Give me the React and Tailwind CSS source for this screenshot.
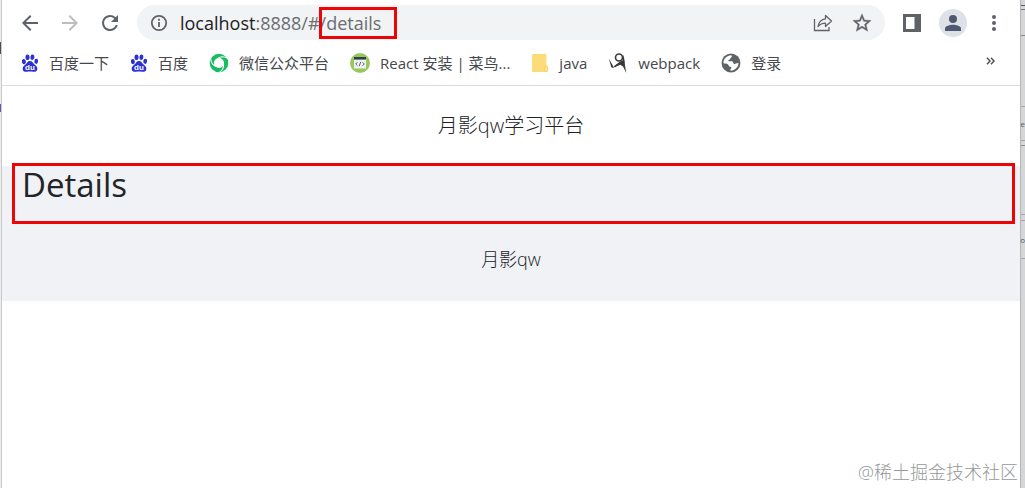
import React from 'react';

const ArrowIcon = ({ className }) => (
  <svg viewBox="0 0 24 24" className={className} fill="currentColor">
    <path d="M20 11H7.83l5.59-5.59L12 4l-8 8 8 8 1.41-1.41L7.83 13H20v-2z" />
  </svg>
);

const ReloadIcon = () => (
  <svg viewBox="0 0 24 24" className="size-6" fill="currentColor">
    <path d="M17.65 6.35A7.96 7.96 0 0 0 12 4a8 8 0 1 0 7.73 10h-2.08A6 6 0 1 1 12 6c1.66 0 3.14.69 4.22 1.78L13 11h7V4l-2.35 2.35z" />
  </svg>
);

const InfoIcon = () => (
  <svg viewBox="0 0 20 20" className="size-5" fill="none" stroke="currentColor" strokeWidth="1.8">
    <circle cx="10" cy="10" r="7.2" />
    <path d="M10 9v5M10 5.8v1.9" />
  </svg>
);

const ShareIcon = () => (
  <svg viewBox="0 0 20 20" className="size-5" fill="none" stroke="currentColor" strokeWidth="1.3">
    <path d="M1.5 6v11.5H16V14" />
    <path d="M12.5 2.5 18.5 8l-6 5.5v-3.3c-3.2 0-5.4.9-7.5 3.3.7-4.2 3-7.2 7.5-7.7z" strokeLinejoin="round" />
  </svg>
);

const StarIcon = () => (
  <svg viewBox="0 0 24 24" className="size-[22px]" fill="currentColor" stroke="currentColor" strokeWidth=".4">
    <path d="m22 9.240-7.190-.620L12 2 9.190 8.630 2 9.240l5.460 4.730L5.820 21 12 17.270 18.180 21l-1.630-7.030L22 9.240zM12 15.400l-3.760 2.270 1-4.280-3.320-2.880 4.380-.380L12 6.100l1.710 4.040 4.380.38-3.320 2.880 1 4.280L12 15.400z" />
  </svg>
);

const PanelIcon = () => (
  <svg viewBox="0 0 18 18" className="size-[18px]">
    <path fill="currentColor" d="M0 0h18v18H0z" />
    <path fill="#fff" d="M3 3h8.500v12H3z" />
  </svg>
);

const BaiduIcon = () => (
  <svg viewBox="0 0 18 18" className="size-[18px]" fill="#2a32d2">
    <ellipse cx="2.900" cy="7.600" rx="2" ry="2.700" transform="rotate(-12 2.900 7.600)" />
    <ellipse cx="6.500" cy="3.200" rx="2" ry="2.800" />
    <ellipse cx="11.400" cy="3.200" rx="2" ry="2.800" transform="rotate(10 11.400 3.200)" />
    <ellipse cx="15.200" cy="7.300" rx="1.900" ry="2.600" transform="rotate(8 15.200 7.300)" />
    <path d="M9 7c2.300 0 2.800 1.900 4.300 3.300 1.800 1.600 3.300 2.600 3 4.900-.3 2.200-2.300 2.900-4.300 2.500-2-.4-4-.4-6 0-2.200.4-4-.4-4.300-2.500-.3-2.200 1.300-3.400 3-4.900C6.200 8.900 6.700 7 9 7z" />
    <text x="9" y="16" textAnchor="middle" fill="#fff" fontSize="8" fontWeight="700" fontFamily="Liberation Sans, sans-serif">du</text>
  </svg>
);

const WechatPlatformIcon = () => (
  <svg viewBox="0 0 20 20" className="size-5" fill="none">
    <circle cx="10" cy="10" r="7.200" stroke="#16bd65" strokeWidth="4.200" />
    {[0, 120, 240].map((angle) => (
      <path key={angle} transform={`rotate(${angle} 10 10)`} d="M8.500 5.500c3-2 6-2.300 9.500-.5" stroke="#fff" strokeWidth="1" />
    ))}
  </svg>
);

const RunoobIcon = () => (
  <svg viewBox="0 0 20 20" className="size-5">
    <circle cx="10" cy="10" r="10" fill="#98c85c" />
    <path fill="#eef2f3" d="M4 5h12v10.500H4z" />
    <path fill="#303d4d" d="M4 4h12v2.600H4z" />
    <path fill="none" stroke="#303d4d" strokeWidth=".8" d="M7.500 9.200 5.700 11l1.800 1.800M12.500 9.200l1.800 1.800-1.800 1.800M10.700 8.900l-1.400 4.200" />
  </svg>
);

const FolderIcon = () => (
  <svg viewBox="0 0 16 18" className="h-[18px] w-[18px]">
    <path fill="#fbdc78" d="M1 0h12.500q1 0 1 1v10.500l1.500 1V17q0 1-1 1H1q-1 0-1-1V1q0-1 1-1z" />
    <path fill="#ffe99a" stroke="#f3cb55" strokeWidth=".7" d="M12.700 17.500v-4.200l1.800-1.600 1.200 1.400v3.400l-1 1z" />
  </svg>
);

const WebpackIcon = () => (
  <svg viewBox="0 0 20 20" className="size-5" fill="none" stroke="#383838">
    <circle cx="11" cy="4.500" r="3.500" strokeWidth="1.600" />
    <path strokeWidth="1.600" d="M14.500 2.500c1.600 3.500 1.400 7 1 10M14.500 8.500c-3 1-5.500 3.300-8 5.300" />
    <path fill="#383838" stroke="none" d="M.7 5.500 4.500 12l1.600 2.800-2.700-.2zM14.500 7.500l1.700 0 2 12.500-3-6.300-2.700-1.900-7 2.700z" />
  </svg>
);

const GlobeIcon = () => (
  <svg viewBox="0 0 18 18" className="size-5">
    <circle cx="9" cy="9" r="8.500" fill="#5f6368" />
    <path fill="#fff" d="M9.200 2c.9.600.7 1.700-.2 2.200-.9.400-.4 1.200-1.200 1.700-.8.400-1.500.6-1.100 1.300.7.800 2.900-.2 3.800.6.8.8.2 1.700 1.400 2 1.200.2 1.300-.7 3.900-.8-.2 3.700-3.300 6.800-7 6.900-.8-.7-.2-1.600.4-2.200.6-.7 0-1.300-.8-1.400-1.300-.1-1.500-.7-1.700-1.500-.2-1-2.500-1.300-4.500-1.600C2.100 5.400 5.200 2 9.200 2z" />
    <path fill="#5f6368" d="M9.300 3.600h3.400l1.500 2.500-2.700.5z" />
  </svg>
);

const bookmarks = [
  { label: '百度一下', icon: BaiduIcon },
  { label: '百度', icon: BaiduIcon },
  { label: '微信公众平台', icon: WechatPlatformIcon },
  { label: 'React 安装 | 菜鸟...', icon: RunoobIcon },
  { label: 'java', icon: FolderIcon },
  { label: 'webpack', icon: WebpackIcon },
  { label: '登录', icon: GlobeIcon },
];

const Toolbar = () => (
  <div className="flex h-[45px] items-center px-4 text-[#5f6368]">
    <button type="button" aria-label="Back" className="mr-4">
      <ArrowIcon className="size-6" />
    </button>
    <button type="button" aria-label="Forward" disabled className="mr-4 text-[#bbbdbf]">
      <ArrowIcon className="size-6 rotate-180" />
    </button>
    <button type="button" aria-label="Reload" className="mr-[15px]">
      <ReloadIcon />
    </button>

    <div className="flex h-[35px] flex-1 items-center rounded-full bg-[#f1f3f4] px-3">
      <InfoIcon />
      <div className="ml-[11px] flex-1 text-lg leading-6 text-[#6b6e72]">
        <span className="text-[#202124]">localhost</span>:8888/#
        <span className="relative">
          /details
          <span className="pointer-events-none absolute -top-1 -right-4 -bottom-1 -left-px border-3 border-[#eb0507]"></span>
        </span>
      </div>
      <button type="button" aria-label="Share" className="mr-[18px]">
        <ShareIcon />
      </button>
      <button type="button" aria-label="Bookmark">
        <StarIcon />
      </button>
    </div>

    <button type="button" aria-label="Side panel" className="mx-[18px]">
      <PanelIcon />
    </button>
    <button type="button" aria-label="Profile" className="mr-6 flex size-7 items-center justify-center rounded-full bg-[#dee1e6]">
      <svg viewBox="0 0 16 16" className="size-4" fill="#4e5870">
        <circle cx="8" cy="4" r="4" />
        <path d="M0 16v-2.500C0 11 5 9.800 8 9.800s8 1.200 8 3.700V16z" />
      </svg>
    </button>
    <button type="button" aria-label="Menu" className="mr-[7px]">
      <svg viewBox="0 0 6 18" className="h-[18px] w-1.5" fill="currentColor">
        <circle cx="3" cy="3" r="2" />
        <circle cx="3" cy="9" r="2" />
        <circle cx="3" cy="15" r="2" />
      </svg>
    </button>
  </div>
);

const BookmarksBar = () => (
  <nav className="flex h-[41px] items-center border-b border-[#dadce0] pr-6 pb-1 pl-[19px] text-[15px] text-[#45484c]">
    <div className="flex flex-1 items-center gap-[21px]">
      {bookmarks.map(({ label, icon: Icon }) => (
        <a key={label} href="#" className="flex items-center gap-2.5 whitespace-nowrap">
          <Icon />
          {label}
        </a>
      ))}
    </div>
    <button type="button" aria-label="More bookmarks" className="pb-1">
      <svg viewBox="0 0 10 8" className="h-2 w-2.5" fill="none" stroke="#50545a" strokeWidth="1.500">
        <path d="m1 .8 3 3.200-3 3.200M5 .8 8 4 5 7.200" />
      </svg>
    </button>
  </nav>
);

const App = () => {
  return (
    <div className="flex min-h-screen bg-white font-['Open_Sans','Noto_Sans_CJK_SC',sans-serif]">
      <div className="flex w-0.5 flex-col border-r border-[#c9c9cc] bg-[#ededf0]">
        <div className="mt-[42px] h-3 bg-[#5a4a44]"></div>
        <div className="mt-[50px] h-2 bg-[#6a50c8]"></div>
      </div>

      <div className="flex min-w-0 flex-1 flex-col">
        <Toolbar />
        <BookmarksBar />

        <header className="flex h-20 items-center justify-center text-xl font-light text-[#202326]">月影qw学习平台</header>
        <main className="relative h-[58px] bg-[#f0f2f5] px-5">
          <h1 className="text-[33px] leading-[38px] text-[#212529]">Details</h1>
          <div className="pointer-events-none absolute -top-[3px] right-[5px] bottom-0 left-2.5 border-3 border-[#eb0507]"></div>
        </main>
        <footer className="flex h-[77px] items-center justify-center bg-[#f0f2f5] pb-2 text-lg font-light text-[#202326]">月影qw</footer>

        <p className="mt-auto pr-0.5 pb-1 text-right text-lg leading-6 font-light text-[#96979a]">@稀土掘金技术社区</p>
      </div>

      {/* edge of the window behind */}
      <div className="flex w-[5px] flex-col border-l border-[#b4b5b8] bg-[#d5d6d8] text-[8px] leading-none text-[#55585c]">
        <div className="h-1.5 border-b border-[#55585c]"></div>
        <div className="h-1 border-b border-[#77797c]"></div>
        <div className="h-[26px] border-b border-[#85878a]"></div>
        <div className="h-[71px] border-b border-[#a5a7aa]"></div>
        <div className="flex h-[34px] items-center justify-end border-b border-[#a5a7aa]">e</div>
        <div className="h-[5px] border-b border-[#8b8d90]"></div>
        <div className="h-[69px] border-b border-[#a5a7aa]"></div>
        <div className="h-1.5 border-b border-[#a5a7aa]"></div>
        <div className="flex h-[38px] items-center justify-end border-b border-[#a5a7aa]">o</div>
      </div>
    </div>
  );
};

export default App;
